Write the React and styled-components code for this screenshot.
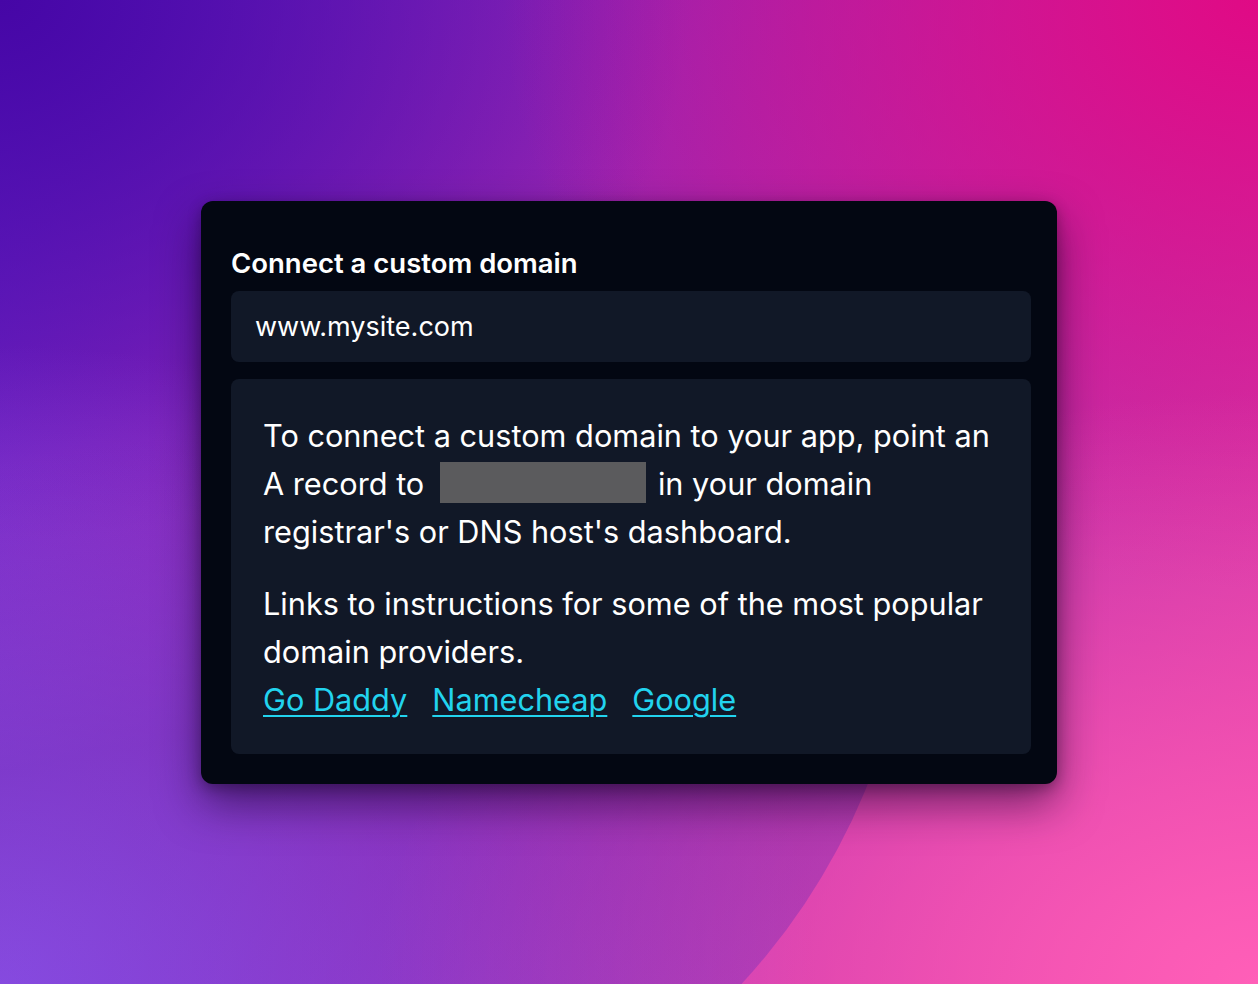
import styled, { createGlobalStyle } from "styled-components"

const GlobalStyle = createGlobalStyle`
    * { box-sizing: border-box; }
    html, body {
        margin: 0;
        padding: 0;
    }
    body {
        font-family: Inter, "Noto Sans", "Liberation Sans", sans-serif;
        -webkit-font-smoothing: antialiased;
    }
`

const Page = styled.div`
    position: relative;
    width: 1258px;
    height: 984px;
    overflow: hidden;
    display: flex;
    align-items: center;
    justify-content: center;
    background:
        radial-gradient(ellipse 70% 60% at 100% 100%, #ff5fb8 0%, rgba(255, 95, 184, 0) 100%),
        radial-gradient(ellipse 60% 60% at 100% 0%, #e00a85 0%, rgba(224, 10, 133, 0) 100%),
        radial-gradient(ellipse 65% 65% at 0% 100%, #9c5cf4 0%, rgba(156, 92, 244, 0) 100%),
        radial-gradient(ellipse 55% 55% at 0% 0%, #4606a6 0%, rgba(70, 6, 166, 0) 100%),
        linear-gradient(120deg, #5e22c8 0%, #a426ae 45%, #e23aa4 100%);

    &::before {
        content: "";
        position: absolute;
        left: -395px;
        top: -115px;
        width: 1310px;
        height: 1310px;
        border-radius: 50%;
        background: linear-gradient(170deg, rgba(90, 20, 150, 0) 42%, rgba(70, 20, 150, 0.28) 62%, rgba(90, 40, 190, 0.32) 85%);
    }
`

const Card = styled.div`
    position: relative;
    width: 856px;
    padding: 44px 26px 30px 30px;
    background: #030712;
    border-radius: 12px;
    box-shadow: 0 20px 44px rgba(20, 0, 40, 0.55), 0 4px 14px rgba(0, 0, 0, 0.3);
    display: flex;
    flex-direction: column;
`

const Title = styled.label`
    color: #ffffff;
    font-size: 27.5px;
    font-weight: 600;
    line-height: 36px;
    margin-bottom: 10px;
`

const DomainInput = styled.input`
    height: 71px;
    border: none;
    outline: none;
    border-radius: 8px;
    background: #111827;
    color: #ffffff;
    font-family: inherit;
    font-size: 27px;
    padding: 0 24px;
    margin-bottom: 17px;
`

const InfoBox = styled.div`
    background: #111827;
    border-radius: 8px;
    padding: 33px 32px 30px;
    color: #ffffff;
    font-size: 30.7px;
    line-height: 48px;
`

const Paragraph = styled.p`
    margin: 0 0 ${props => props.$gap || 0}px;
`

const Redacted = styled.span`
    display: inline-block;
    width: 206px;
    height: 41px;
    background: #5b5b5d;
    vertical-align: middle;
    margin: -7px 3px 0 16px;
`

const Links = styled.div`
    display: flex;
    gap: 25px;
`

const Link = styled.a`
    color: #22d3ee;
    text-decoration: underline;
    text-decoration-thickness: 2px;
    text-underline-offset: 4px;
`

const providers = ["Go Daddy", "Namecheap", "Google"]

export default function App() {
    return (
        <>
            <GlobalStyle />
            <Page>
                <Card>
                    <Title htmlFor="domain">Connect a custom domain</Title>
                    <DomainInput id="domain" defaultValue="www.mysite.com" />
                    <InfoBox>
                        <Paragraph $gap={24}>
                            To connect a custom domain to your app, point an A record to
                            <Redacted /> in your domain registrar's or DNS host's dashboard.
                        </Paragraph>
                        <Paragraph>
                            Links to instructions for some of the most popular domain providers.
                        </Paragraph>
                        <Links>
                            {providers.map(name => (
                                <Link key={name} href="#">{name}</Link>
                            ))}
                        </Links>
                    </InfoBox>
                </Card>
            </Page>
        </>
    )
}
